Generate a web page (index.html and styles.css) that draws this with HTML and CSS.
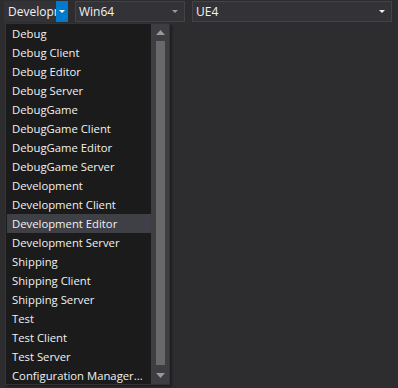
FILE: index.html
```html
<!DOCTYPE html>
<html>
<head>
<meta charset="utf-8">
<link rel="stylesheet" href="styles.css">
</head>
<body>
<div class="toolbar">
  <div class="combo combo-config">
    <span class="combo-text">Development Editor</span>
    <span class="combo-btn"><svg width="6" height="3" viewBox="0 0 6 3"><path d="M0 0H6L3 3Z" fill="#fff"/></svg></span>
  </div>
  <div class="combo combo-platform">
    <span class="combo-text">Win64</span>
    <span class="combo-arrow"><svg width="6" height="3" viewBox="0 0 6 3"><path d="M0 0H6L3 3Z" fill="#999"/></svg></span>
  </div>
  <div class="combo combo-project">
    <span class="combo-text">UE4</span>
    <span class="combo-arrow"><svg width="6" height="3" viewBox="0 0 6 3"><path d="M0 0H6L3 3Z" fill="#f1f1f1"/></svg></span>
  </div>
</div>

<div class="dropdown">
  <ul class="list">
    <li>Debug</li>
    <li>Debug Client</li>
    <li>Debug Editor</li>
    <li>Debug Server</li>
    <li>DebugGame</li>
    <li>DebugGame Client</li>
    <li>DebugGame Editor</li>
    <li>DebugGame Server</li>
    <li>Development</li>
    <li>Development Client</li>
    <li class="selected">Development Editor</li>
    <li>Development Server</li>
    <li>Shipping</li>
    <li>Shipping Client</li>
    <li>Shipping Server</li>
    <li>Test</li>
    <li>Test Client</li>
    <li>Test Server</li>
    <li>Configuration Manager...</li>
  </ul>
  <div class="scrollbar">
    <svg class="sb-arrow" width="9" height="5" viewBox="0 0 9 5"><path d="M4.5 0L9 5H0Z" fill="#999"/></svg>
    <div class="sb-track"><div class="sb-thumb"></div></div>
    <svg class="sb-arrow" width="9" height="5" viewBox="0 0 9 5"><path d="M0 0H9L4.5 5Z" fill="#999"/></svg>
  </div>
</div>
</body>
</html>
```
FILE: styles.css
```css
html, body {
  margin: 0;
  padding: 0;
  background: #2d2d30;
  width: 398px;
  height: 388px;
  overflow: hidden;
  font-family: "Open Sans", "Noto Sans", sans-serif;
  font-size: 11.3px;
  color: #f1f1f1;
}

.toolbar {
  display: flex;
  gap: 7px;
  padding: 1px 0 0 4px;
  height: 21px;
}

.combo {
  box-sizing: border-box;
  height: 21px;
  display: flex;
  align-items: center;
  background: #333337;
  border: 1px solid #434346;
  position: relative;
}

.combo-text {
  padding-left: 3px;
  white-space: nowrap;
  overflow: hidden;
  flex: 1;
  line-height: 19px;
  font-size: 12px;
}

.combo-config {
  width: 64px;
  border-color: #333337;
}

.combo-btn {
  width: 12px;
  height: 21px;
  margin: -1px -1px -1px 0;
  background: #007acc;
  display: flex;
  align-items: center;
  justify-content: center;
}

.combo-platform {
  width: 110px;
}

.combo-project {
  width: 200px;
}

.combo-arrow {
  width: 14px;
  display: flex;
  align-items: center;
  justify-content: center;
  padding-right: 2px;
}

.dropdown {
  position: absolute;
  left: 5px;
  top: 23px;
  width: 165px;
  height: 362px;
  box-sizing: border-box;
  background: #1b1b1c;
  border: 1px solid #333337;
  box-shadow: 2px 2px 2px rgba(0, 0, 0, 0.35);
  display: flex;
  overflow: hidden;
}

.list {
  list-style: none;
  margin: 0;
  padding: 0 0 0 1px;
  flex: 1;
}

.list li {
  height: 19px;
  line-height: 19px;
  padding-left: 5px;
  white-space: nowrap;
}

.list li.selected {
  background: #3f3f46;
}

.scrollbar {
  width: 18px;
  background: #3e3e42;
  display: flex;
  flex-direction: column;
  align-items: center;
  padding: 6px 0 6px;
  box-sizing: border-box;
}

.sb-track {
  flex: 1;
  width: 9px;
  padding: 6px 0 8px;
}

.sb-thumb {
  width: 9px;
  height: 100%;
  background: #686868;
}
```
